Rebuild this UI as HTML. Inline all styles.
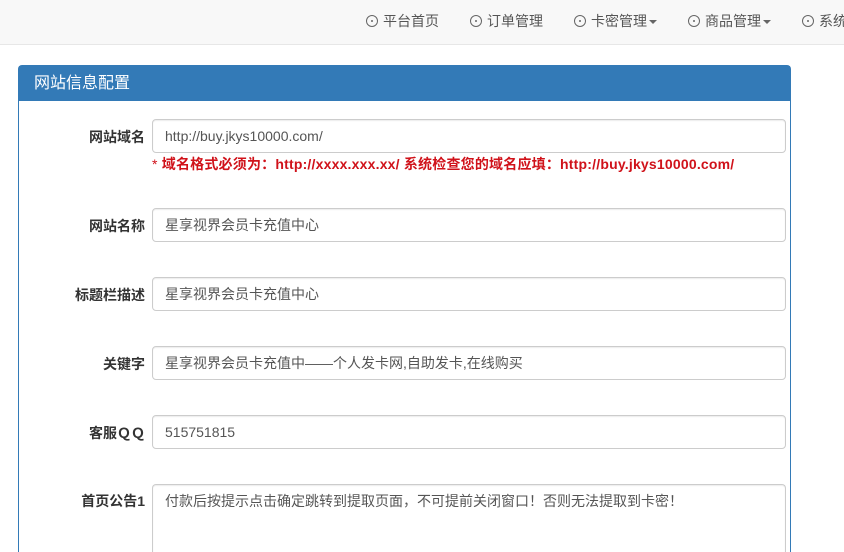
<!DOCTYPE html>
<html><head><meta charset="utf-8"><style>
html,body{margin:0;width:844px;height:552px;overflow:hidden}
body{position:relative;background:#fff;font-family:"Liberation Sans","Noto Sans CJK SC",sans-serif;font-size:14px;color:#333}
.nav{position:absolute;left:0;top:0;width:844px;height:44px;background:#f8f8f8;border-bottom:1px solid #e7e7e7}
.nav span{position:absolute;top:11px;color:#555;font-size:14px;white-space:nowrap}
.nav i{font-style:normal;display:inline-block;width:10px;height:10px;border:1px solid #666;border-radius:50%;position:relative;top:1px;margin-right:5px}
.nav i:after{content:"";position:absolute;left:4px;top:4px;width:2px;height:2px;background:#666;border-radius:50%}
.car{display:inline-block;border-top:4px solid #666;border-left:4px solid transparent;border-right:4px solid transparent;vertical-align:middle;margin-left:2px}
.panel{position:absolute;left:18px;top:65px;width:771px;height:486px;border:1px solid #337ab7;border-bottom:none;border-radius:4px 4px 0 0;background:#fff}
.ph{height:35px;background:#337ab7;color:#fff;font-size:16px;line-height:35px;padding-left:15px}
.lbl{position:absolute;right:699px;font-weight:bold;font-size:14px;color:#333;white-space:nowrap}
.inp{position:absolute;left:152px;width:620px;height:32px;border:1px solid #ccc;border-radius:4px;padding-left:12px;line-height:32px;color:#555;font-size:14px;box-shadow:inset 0 1px 1px rgba(0,0,0,.075)}
.err{position:absolute;left:152px;top:154px;color:#d0121a;font-weight:bold;font-size:14px;white-space:nowrap;letter-spacing:0.2px}
</style></head><body>
<div class="nav">
<span style="left:366px"><i></i>平台首页</span>
<span style="left:470px"><i></i>订单管理</span>
<span style="left:574px"><i></i>卡密管理<b class="car"></b></span>
<span style="left:688px"><i></i>商品管理<b class="car"></b></span>
<span style="left:802px"><i></i>系统</span>
</div>
<div class="panel"><div class="ph">网站信息配置</div></div>
<div class="lbl" style="top:127px">网站域名</div>
<div class="inp" style="top:119px">http://buy.jkys10000.com/</div>
<div class="err"><span style="font-weight:normal">*</span> 域名格式必须为：http://xxxx.xxx.xx/ 系统检查您的域名应填：http://buy.jkys10000.com/</div>
<div class="lbl" style="top:216px">网站名称</div>
<div class="inp" style="top:208px">星享视界会员卡充值中心</div>
<div class="lbl" style="top:285px">标题栏描述</div>
<div class="inp" style="top:277px">星享视界会员卡充值中心</div>
<div class="lbl" style="top:354px">关键字</div>
<div class="inp" style="top:346px">星享视界会员卡充值中——个人发卡网,自助发卡,在线购买</div>
<div class="lbl" style="top:423px">客服ＱＱ</div>
<div class="inp" style="top:415px">515751815</div>
<div class="lbl" style="top:491px">首页公告1</div>
<div class="inp" style="top:484px;height:70px;line-height:32px;border-bottom:none;border-radius:4px 4px 0 0">付款后按提示点击确定跳转到提取页面，不可提前关闭窗口！否则无法提取到卡密！</div>
</body></html>
